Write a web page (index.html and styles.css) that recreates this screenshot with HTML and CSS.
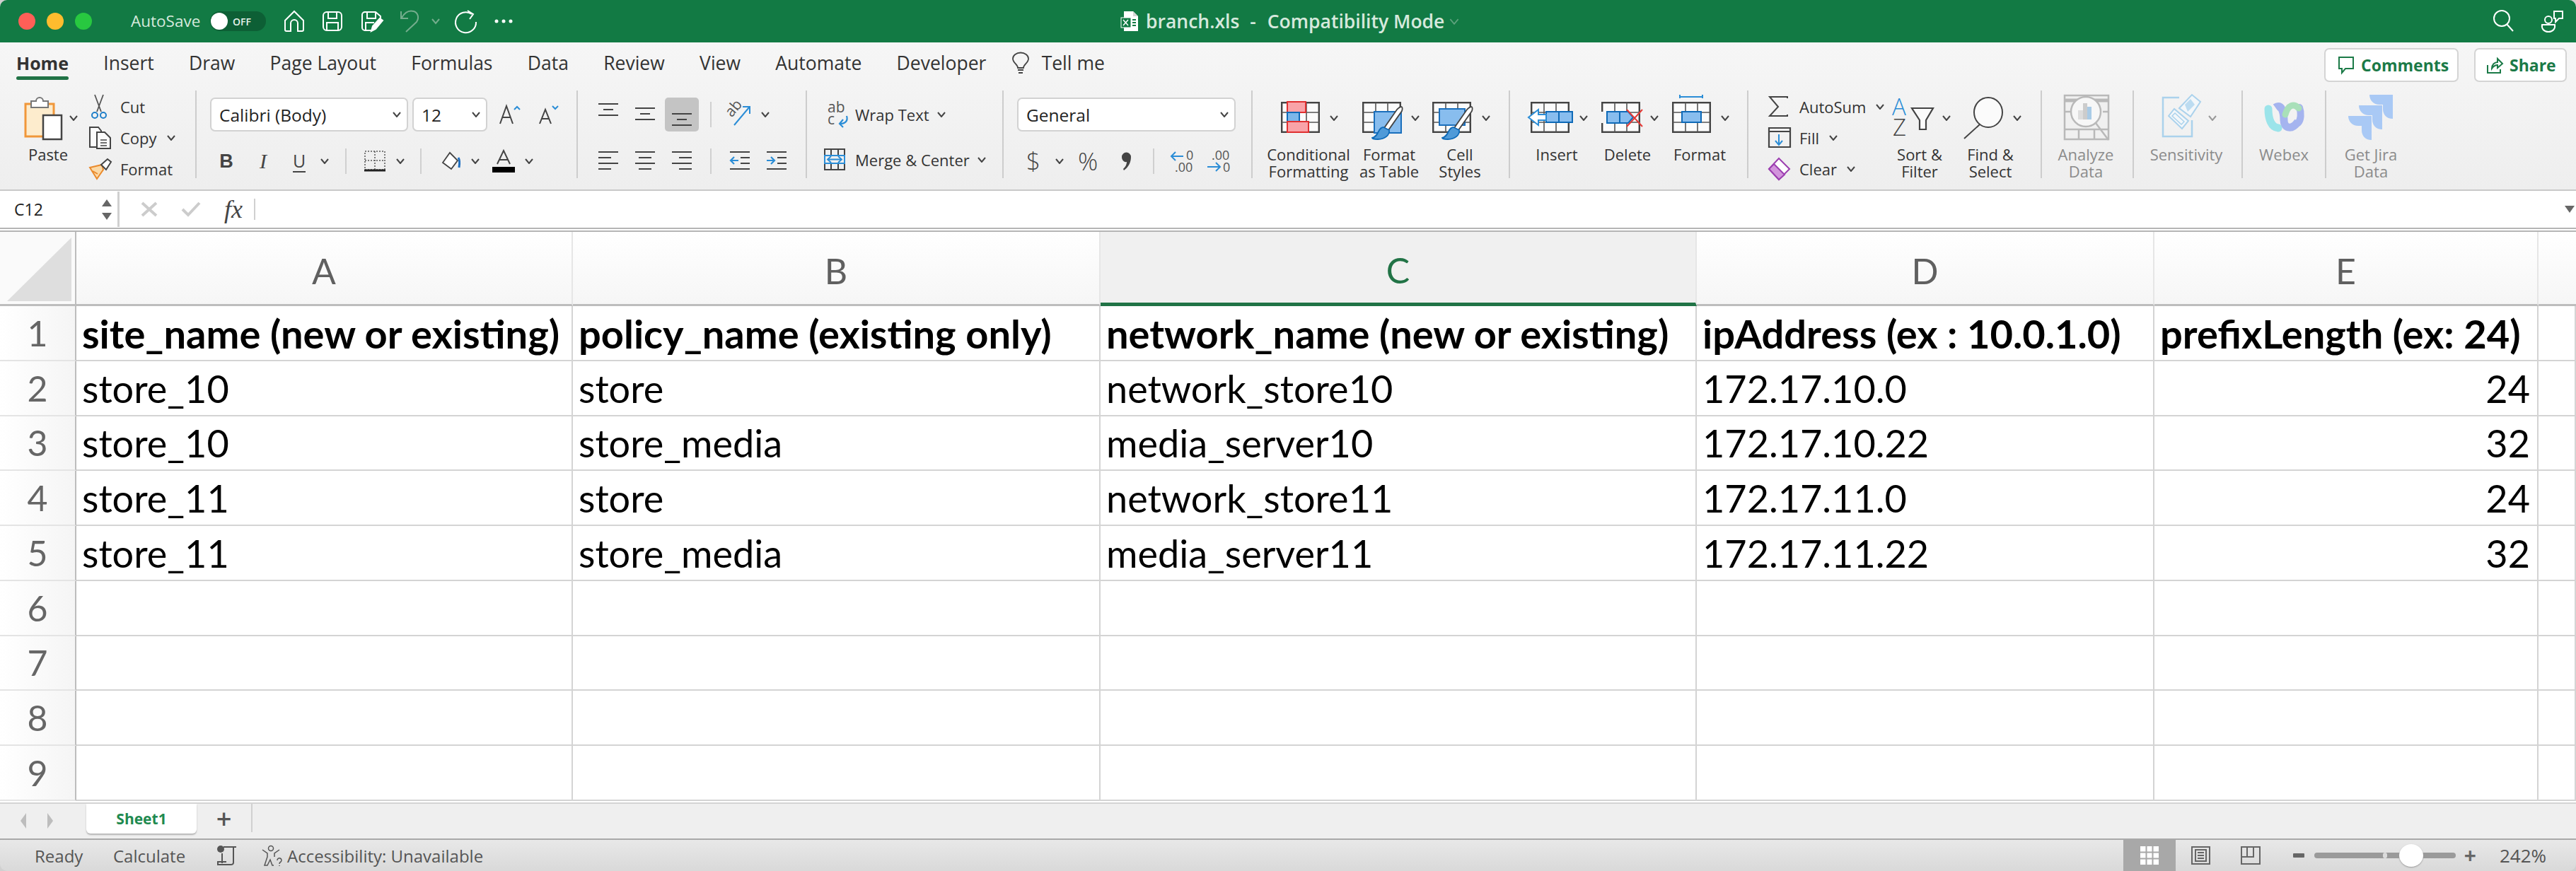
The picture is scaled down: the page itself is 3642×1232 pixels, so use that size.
FILE: index.html
```html
<!DOCTYPE html>
<html lang="en">
<head>
    <meta charset="UTF-8">
    <title>branch.xls - Compatibility Mode</title>
    <link rel="stylesheet" href="styles.css">
</head>
<body>
<svg class="defs" width="0" height="0">
    <symbol id="chev" viewBox="0 0 12 8"><path d="M1 1l5 6 5-6" fill="none" stroke="#444" stroke-width="2"/></symbol>
    <symbol id="chev-dim" viewBox="0 0 12 8"><path d="M1 1l5 6 5-6" fill="none" stroke="#999" stroke-width="2"/></symbol>
    <symbol id="tbl" viewBox="0 0 55 44">
        <rect x="1.2" y="1.2" width="52.6" height="41.6" fill="#fbfbfb" stroke="#444" stroke-width="2.4"/>
        <path d="M19 1v42M36 1v42M1 15h53M1 29h53" fill="none" stroke="#555" stroke-width="1.6"/>
    </symbol>
    <symbol id="brush" viewBox="0 0 46 48">
        <path d="M42 1c2 0 2 3 1 6L24 34l-6-3L36 5c2-2 4-4 6-4z" fill="#fff" stroke="#444" stroke-width="1.8"/>
        <path d="M17 30l8 4c1 7-6 13-16 13-5 0-8-1-8-2 5-1 7-5 9-9 2-4 4-6 7-6z" fill="#4f9ad8" stroke="#0e6ab8" stroke-width="1.8"/>
    </symbol>
    <symbol id="jira-piece" viewBox="0 0 33 34"><path d="M0 0h33v34c-9 0-14-6-14-14v-6h-5C6 14 0 8 0 0z"/></symbol>
</svg>

<div class="app">
    <!-- Title bar -->
    <header class="titlebar">
        <div class="lights"><i class="light red"></i><i class="light yellow"></i><i class="light green"></i></div>
        <span class="autosave">AutoSave</span>
        <div class="toggle"><i class="knob"></i><span>OFF</span></div>
        <div class="quick">
            <svg width="28" height="30" viewBox="0 0 28 30" fill="none" stroke="#fff" stroke-width="2"><path d="M14 1l13 13v13a2 2 0 0 1-2 2h-6V18a5 5 0 0 0-10 0v11H3a2 2 0 0 1-2-2V14z"/></svg>
            <svg width="28" height="30" viewBox="0 0 28 30" fill="none" stroke="#fff" stroke-width="2"><rect x="1" y="2" width="26" height="26" rx="5"/><path d="M8 2v9h12V2M6 28V17h16v11"/></svg>
            <svg width="30" height="30" viewBox="0 0 30 30" fill="none" stroke="#fff" stroke-width="2"><path d="M14 28H5a4 4 0 0 1-4-4V6a4 4 0 0 1 4-4h15l7 6v5"/><path d="M8 2v9h12V2M6 28V17h12"/><path d="M14 29l2-7 10-11 4 3-10 12z" fill="#fff"/></svg>
            <svg width="28" height="32" viewBox="0 0 28 32" fill="none" stroke="#74ad8d" stroke-width="2"><path d="M2 2v10h10M3 11C7 4 13 0 20 2c6 2 8 9 4 15L9 31"/></svg>
            <svg width="12" height="8"><path d="M1 1l5 6 5-6" fill="none" stroke="#74ad8d" stroke-width="2"/></svg>
            <svg width="32" height="32" viewBox="0 0 32 32" fill="none" stroke="#fff" stroke-width="2"><path d="M24 6A14.500 14.500 0 1 0 30 17"/><path d="M18 1l8 5-5 7"/></svg>
            <svg width="26" height="6" viewBox="0 0 26 6" fill="#fff"><circle cx="3" cy="3" r="2.500"/><circle cx="13" cy="3" r="2.500"/><circle cx="23" cy="3" r="2.500"/></svg>
        </div>
        <div class="doc-title">
            <svg width="26" height="30" viewBox="0 0 26 30"><path d="M5 1h13l7 7v21H5z" fill="#fff"/><path d="M18 1v7h7" fill="#d5d5d5"/><rect x="1" y="10" width="14" height="14" fill="#127a44" stroke="#fff"/><path d="M4 13l7 8M11 13l-7 8" stroke="#fff" stroke-width="1.500"/><path d="M17 13h5M17 17h5M17 21h5" stroke="#127a44" stroke-width="2"/></svg>
            <span class="doc-name">branch.xls</span><span class="doc-dash">-</span><span class="doc-name">Compatibility Mode</span>
            <svg width="16" height="9" viewBox="0 0 12 8"><path d="M1 1l5 6 5-6" fill="none" stroke="#5fa27e" stroke-width="1.500"/></svg>
        </div>
        <div class="title-right">
            <svg width="30" height="30" viewBox="0 0 30 30" fill="none" stroke="#fff" stroke-width="2"><ellipse cx="12" cy="12" rx="11" ry="11"/><path d="M19 20l9 10"/></svg>
            <svg width="32" height="32" viewBox="0 0 32 32" fill="none" stroke="#fff" stroke-width="2"><circle cx="10" cy="14" r="5"/><path d="M1 21h18c1 6-3 10-9 10S0 27 1 21zM18 2h12v10h-5l-5 5v-5h-2z"/></svg>
        </div>
    </header>

    <!-- Ribbon -->
    <section class="ribbon">
        <div class="tabs-row">
            <nav class="tabs">
                <a class="tab active">Home</a>
                <a class="tab">Insert</a>
                <a class="tab">Draw</a>
                <a class="tab">Page Layout</a>
                <a class="tab">Formulas</a>
                <a class="tab">Data</a>
                <a class="tab">Review</a>
                <a class="tab">View</a>
                <a class="tab">Automate</a>
                <a class="tab">Developer</a>
                <a class="tab tell">
                    <svg width="26" height="30" viewBox="0 0 26 30" fill="none" stroke="#444" stroke-width="1.800"><path d="M9 22c0-5-7-7-7-13a11 8.500 0 0 1 22 0c0 6-7 8-7 13z"/><path d="M9 25h8M10 29h6"/></svg>
                    Tell me
                </a>
            </nav>
            <div class="share-btns">
                <button class="pill pill-comments">
                    <svg width="24" height="24" viewBox="0 0 24 24" fill="none" stroke="#1b7a47" stroke-width="2"><path d="M2 1h20v16H11l-5 6v-6H2z"/></svg>
                    Comments
                </button>
                <button class="pill pill-share">
                    <svg width="24" height="24" viewBox="0 0 24 24" fill="none" stroke="#1b7a47" stroke-width="2"><path d="M2 12v11h18v-5M8 17c0-6 4-9 8-9V3l7 7-7 6v-4c-4 0-6 2-8 5z"/></svg>
                    Share
                </button>
            </div>
        </div>

        <div class="groups">
            <!-- Clipboard -->
            <div class="group g-clip">
                <div class="big b-paste">
                    <svg width="96" height="76" viewBox="0 0 96 76">
                        <path d="M16 19h40v46H16z" fill="#fdeccd" stroke="#f0973a" stroke-width="3"/>
                        <path d="M24 24v-9h7a5 5 0 0 1 10 0h7v9z" fill="#fff" stroke="#777" stroke-width="2"/>
                        <rect x="41" y="35" width="26" height="34" fill="#fff" stroke="#444" stroke-width="2.500"/>
                        <use href="#chev" x="78" y="35" width="12" height="8"/>
                    </svg>
                    <span class="label">Paste</span>
                </div>
                <div class="stack">
                    <div class="stack-item">
                        <span class="stack-ico"><svg width="28" height="34" viewBox="0 0 28 34" fill="none"><path d="M8 0l9 24M20 0l-9 24" stroke="#555" stroke-width="1.800"/><circle cx="8" cy="29" r="4" stroke="#1f7fc9" stroke-width="2"/><circle cx="20" cy="29" r="4" stroke="#1f7fc9" stroke-width="2"/></svg></span>
                        <span class="label">Cut</span>
                    </div>
                    <div class="stack-item">
                        <span class="stack-ico"><svg width="32" height="32" viewBox="0 0 32 32" fill="#fbfbfb" stroke="#444" stroke-width="2"><path d="M1 1h12l4 5v23H1z"/><path d="M11 8h11l8 8v15H11z"/><path d="M16 19h9M16 23h9M16 27h9" stroke-width="1.500"/></svg></span>
                        <span class="label">Copy</span>
                        <svg class="chev-after" width="12" height="8"><use href="#chev"/></svg>
                    </div>
                    <div class="stack-item">
                        <span class="stack-ico"><svg width="32" height="30" viewBox="0 0 32 30"><path d="M1 13l17-4 2 7-9 13z" fill="#fbd9a6" stroke="#ea8a2c" stroke-width="2"/><path d="M5 18l7 4" stroke="#ea8a2c" stroke-width="2"/><path d="M17 9l9-8 5 4-7 11z" fill="#fff" stroke="#444" stroke-width="2"/></svg></span>
                        <span class="label">Format</span>
                    </div>
                </div>
            </div>

            <!-- Font -->
            <div class="group g-font two-rows">
                <div class="row font-r1">
                    <div class="select sel-font"><span>Calibri (Body)</span><svg width="12" height="8"><use href="#chev"/></svg></div>
                    <div class="select sel-size"><span>12</span><svg width="12" height="8"><use href="#chev"/></svg></div>
                    <svg class="grow-a" width="32" height="28" viewBox="0 0 32 28"><path d="M2 27L11 2l9 25M5 18h12" fill="none" stroke="#444" stroke-width="2"/><path d="M22 7l4-4 4 4" fill="none" stroke="#2b8dd6" stroke-width="2"/></svg>
                    <svg class="shrink-a" width="30" height="28" viewBox="0 0 30 28"><path d="M2 27l8-20 8 20M5 20h10" fill="none" stroke="#444" stroke-width="2"/><path d="M20 2l4 4 4-4" fill="none" stroke="#2b8dd6" stroke-width="2"/></svg>
                </div>
                <div class="row font-r2">
                    <b class="fmt">B</b>
                    <i class="fmt fmt-i">I</i>
                    <span class="fmt-u">U</span>
                    <svg width="12" height="8"><use href="#chev"/></svg>
                    <i class="vsep"></i>
                    <svg width="30" height="30" viewBox="0 0 30 30" fill="none"><path d="M1 1h28v26H1zM15 1v26M1 14h28" stroke="#555" stroke-width="1.500" stroke-dasharray="2 2"/><path d="M0 28h30" stroke="#222" stroke-width="3"/></svg>
                    <svg width="12" height="8"><use href="#chev"/></svg>
                    <i class="vsep"></i>
                    <svg width="28" height="26" viewBox="0 0 28 26" fill="none"><path d="M12 1l11 11-9 12-12-9z" fill="#fff" stroke="#444" stroke-width="1.800"/><path d="M24 8c2 3 2 8 1 14" stroke="#1f6fc0" stroke-width="3"/></svg>
                    <svg width="12" height="8"><use href="#chev"/></svg>
                    <svg width="32" height="32" viewBox="0 0 32 32"><path d="M7 20L16 1l9 19M10 14h12" fill="none" stroke="#444" stroke-width="2"/><rect y="24" width="32" height="8" fill="#000"/></svg>
                    <svg width="12" height="8"><use href="#chev"/></svg>
                </div>
            </div>

            <!-- Alignment -->
            <div class="group g-align two-rows">
                <div class="row align-r1">
                    <svg width="28" height="48" viewBox="0 0 28 48" stroke="#444" stroke-width="2.200"><path d="M0 9h28M7 17h14M0 25h28"/></svg>
                    <svg width="28" height="48" viewBox="0 0 28 48" stroke="#444" stroke-width="2.200"><path d="M0 15h28M7 23h14M0 31h28"/></svg>
                    <div class="selected"><svg width="28" height="48" viewBox="0 0 28 48" stroke="#444" stroke-width="2.200"><path d="M0 23h28M7 31h14M0 39h28"/></svg></div>
                    <i class="vsep"></i>
                    <svg width="34" height="32" viewBox="0 0 34 32" fill="none"><text x="1" y="15" class="ab" transform="rotate(-50 10 12)">ab</text><path d="M10 31L31 6M22 5h10v10" stroke="#2b8dd6" stroke-width="2"/></svg>
                    <svg width="12" height="8"><use href="#chev"/></svg>
                </div>
                <div class="row align-r2">
                    <svg width="28" height="32" viewBox="0 0 28 32" stroke="#444" stroke-width="2.200"><path d="M0 3h28M0 11h18M0 19h28M0 27h18"/></svg>
                    <svg width="28" height="32" viewBox="0 0 28 32" stroke="#444" stroke-width="2.200"><path d="M0 3h28M5 11h18M0 19h28M5 27h18"/></svg>
                    <svg width="28" height="32" viewBox="0 0 28 32" stroke="#444" stroke-width="2.200"><path d="M0 3h28M10 11h18M0 19h28M10 27h18"/></svg>
                    <i class="vsep"></i>
                    <svg width="28" height="32" viewBox="0 0 28 32" fill="none"><path d="M0 3h28M15 11h13M15 19h13M0 27h28" stroke="#444" stroke-width="2.200"/><path d="M12 15H1M6 10l-5 5 5 5" stroke="#2b8dd6" stroke-width="2.200"/></svg>
                    <svg width="28" height="32" viewBox="0 0 28 32" fill="none"><path d="M0 3h28M15 11h13M15 19h13M0 27h28" stroke="#444" stroke-width="2.200"/><path d="M0 15h11M6 10l5 5-5 5" stroke="#2b8dd6" stroke-width="2.200"/></svg>
                </div>
            </div>

            <!-- Wrap and merge -->
            <div class="group g-merge two-rows">
                <div class="row merge-r1">
                    <svg width="44" height="48" viewBox="0 0 44 48" fill="none"><text x="5" y="21" class="ab">ab</text><text x="5" y="38" class="ab">c</text><path d="M32 26c2 6-1 11-9 11M27 31l-5 6 5 5" stroke="#2b8dd6" stroke-width="2.200"/></svg>
                    <span class="label">Wrap Text</span>
                    <svg width="12" height="8"><use href="#chev"/></svg>
                </div>
                <div class="row merge-r2">
                    <svg width="44" height="32" viewBox="0 0 44 32" fill="none"><path d="M1 1h28v29H1zM10 1v9M20 1v9M10 21v9M20 21v9" stroke="#444" stroke-width="2"/><path d="M1 10h28v11H1z" stroke="#2b8dd6" stroke-width="2"/><path d="M5 15.500h20M10 11l-5 4.500 5 4.500M20 11l5 4.500-5 4.500" stroke="#2b8dd6" stroke-width="1.800"/></svg>
                    <span class="label">Merge &amp; Center</span>
                    <svg width="12" height="8"><use href="#chev"/></svg>
                </div>
            </div>

            <!-- Number -->
            <div class="group g-number two-rows">
                <div class="row number-r1">
                    <div class="select sel-number"><span>General</span><svg width="12" height="8"><use href="#chev"/></svg></div>
                </div>
                <div class="row number-r2">
                    <span class="num-sym">$</span>
                    <svg width="12" height="8"><use href="#chev"/></svg>
                    <span class="num-sym">%</span>
                    <svg width="15" height="27" viewBox="0 0 15 27" fill="#444"><path d="M1 7a6.500 6.500 0 0 1 13 0c0 8-4 15-10 19l-1-2c3-3 5-6 5-10-4 1-7-3-7-7z"/></svg>
                    <i class="vsep"></i>
                    <svg width="36" height="32" viewBox="0 0 36 32" fill="none"><text x="24" y="14" class="dec">0</text><text x="8" y="31" class="dec">.00</text><path d="M20 9H3M9 3L3 9l6 6" stroke="#2b8dd6" stroke-width="2"/></svg>
                    <svg width="36" height="32" viewBox="0 0 36 32" fill="none"><text x="8" y="14" class="dec">.00</text><text x="24" y="31" class="dec">0</text><path d="M2 24h18M14 18l6 6-6 6" stroke="#2b8dd6" stroke-width="2"/></svg>
                </div>
            </div>

            <!-- Styles -->
            <div class="group g-styles">
                <div class="big b-cond">
                    <svg width="116" height="76" viewBox="0 0 116 76">
                        <use href="#tbl" x="19" y="16" width="55" height="44"/>
                        <path d="M28 16h26v15H28z" fill="#f9a3a8" stroke="#e03030" stroke-width="2"/>
                        <path d="M28 31h17v13H28z" fill="#7cb7ea" stroke="#0e6ab8" stroke-width="2"/>
                        <path d="M28 44h30v15H28z" fill="#f9a3a8" stroke="#e03030" stroke-width="2"/>
                        <use href="#chev" x="88" y="35" width="12" height="8"/>
                    </svg>
                    <span class="label">Conditional<br>Formatting</span>
                </div>
                <div class="big b-table">
                    <svg width="112" height="76" viewBox="0 0 112 76">
                        <use href="#tbl" x="18" y="16" width="55" height="44"/>
                        <path d="M35 30h38v30H35z" fill="#88bdee" stroke="#1a6fbc" stroke-width="2"/>
                        <use href="#brush" x="31" y="22" width="46" height="48"/>
                        <use href="#chev" x="87" y="35" width="12" height="8"/>
                    </svg>
                    <span class="label">Format<br>as Table</span>
                </div>
                <div class="big b-cellst">
                    <svg width="88" height="76" viewBox="0 0 88 76">
                        <use href="#tbl" x="5" y="16" width="55" height="44"/>
                        <path d="M15 26h36v23H15z" fill="#88bdee" stroke="#1a6fbc" stroke-width="2"/>
                        <use href="#brush" x="18" y="22" width="46" height="48"/>
                        <use href="#chev" x="75" y="35" width="12" height="8"/>
                    </svg>
                    <span class="label">Cell<br>Styles</span>
                </div>
            </div>

            <!-- Cells -->
            <div class="group g-cells">
                <div class="big b-ins">
                    <svg width="100" height="76" viewBox="0 0 100 76">
                        <use href="#tbl" x="13" y="16" width="55" height="44"/>
                        <path d="M35 30h37v15H35zM53 30v15" fill="#88bdee" stroke="#0e6ab8" stroke-width="2"/>
                        <path d="M24 27l-14 11 14 11v-7h11v-8H24z" fill="#fff" stroke="#2b8dd6" stroke-width="2"/>
                        <use href="#chev" x="82" y="35" width="12" height="8"/>
                    </svg>
                    <span class="label">Insert</span>
                </div>
                <div class="big b-del">
                    <svg width="100" height="76" viewBox="0 0 100 76">
                        <use href="#tbl" x="13" y="16" width="55" height="44"/>
                        <path d="M11 30h9v16h-9z" fill="#f3f3f3"/>
                        <path d="M21 30h30l7 8-7 8H21zM39 30v16" fill="#88bdee" stroke="#0e6ab8" stroke-width="2"/>
                        <path d="M49 27l22 24M71 27L49 51" stroke="#e53935" stroke-width="2"/>
                        <use href="#chev" x="82" y="35" width="12" height="8"/>
                    </svg>
                    <span class="label">Delete</span>
                </div>
                <div class="big b-fmt">
                    <svg width="104" height="76" viewBox="0 0 104 76">
                        <path d="M24 6v5M24 9h32M56 6v5" fill="none" stroke="#2b8dd6" stroke-width="2"/>
                        <use href="#tbl" x="13" y="16" width="55" height="44"/>
                        <rect x="27" y="30" width="27" height="15" fill="#88bdee" stroke="#0e6ab8" stroke-width="2"/>
                        <use href="#chev" x="82" y="35" width="12" height="8"/>
                    </svg>
                    <span class="label">Format</span>
                </div>
            </div>

            <!-- Editing -->
            <div class="group g-edit">
                <div class="stack stack-edit">
                    <div class="stack-item">
                        <span class="stack-ico"><svg width="28" height="30" viewBox="0 0 28 30" fill="none" stroke="#444" stroke-width="2"><path d="M27 3V1H2l12 14L2 28h25v-2"/></svg></span>
                        <span class="label">AutoSum</span>
                        <svg class="chev-after" width="12" height="8"><use href="#chev"/></svg>
                    </div>
                    <div class="stack-item">
                        <span class="stack-ico"><svg width="32" height="30" viewBox="0 0 32 30" fill="none"><path d="M1 1h30v27H1zM1 6h30" stroke="#444" stroke-width="2.200"/><path d="M15 10v14M10 19l5 6 5-6" stroke="#2b8dd6" stroke-width="2"/></svg></span>
                        <span class="label">Fill</span>
                        <svg class="chev-after" width="12" height="8"><use href="#chev"/></svg>
                    </div>
                    <div class="stack-item">
                        <span class="stack-ico"><svg width="32" height="32" viewBox="0 0 32 32"><path d="M15 1l15 15-15 15L1 16z" fill="#fff" stroke="#9c3fb0" stroke-width="2"/><path d="M8 9l15 15-8 7L1 16z" fill="#d294dc" stroke="#9c3fb0" stroke-width="2"/></svg></span>
                        <span class="label">Clear</span>
                        <svg class="chev-after" width="12" height="8"><use href="#chev"/></svg>
                    </div>
                </div>
                <div class="big b-sort">
                    <svg width="98" height="76" viewBox="0 0 98 76" fill="none">
                        <text x="10" y="35" class="sort-a">A</text>
                        <text x="11" y="64" class="sort-z">Z</text>
                        <path d="M38 25h30L58 42v13h-9V42z" fill="#fbfbfb" stroke="#444" stroke-width="2.200"/>
                        <use href="#chev" x="81" y="35" width="12" height="8"/>
                    </svg>
                    <span class="label">Sort &amp;<br>Filter</span>
                </div>
                <div class="big b-find">
                    <svg width="102" height="76" viewBox="0 0 102 76" fill="none" stroke="#444">
                        <ellipse cx="48" cy="31" rx="20" ry="21" fill="#fbfbfb" stroke-width="2"/>
                        <path d="M36 48L14 68" stroke-width="2"/>
                        <use href="#chev" x="83" y="35" width="12" height="8"/>
                    </svg>
                    <span class="label">Find &amp;<br>Select</span>
                </div>
            </div>

            <!-- Add-ins, all dimmed -->
            <div class="group g-analyze">
                <div class="big dim b-analyze">
                    <svg width="124" height="76" viewBox="0 0 124 76" fill="none" stroke="#b9b9b9" stroke-width="2.500">
                        <rect x="32" y="7" width="62" height="62" fill="#f0f0f0"/>
                        <path d="M32 14h62" stroke-width="5"/>
                        <path d="M32 55h62M52 55v14M74 55v14M32 30h8M86 30h8"/>
                        <circle cx="62" cy="30" r="21" fill="#f7f7f7"/>
                        <rect x="51" y="28" width="7" height="13" fill="#ddd" stroke="none"/>
                        <rect x="58" y="18" width="6" height="23" fill="#ccc" stroke="none"/>
                        <rect x="64" y="23" width="6" height="18" fill="#a9cbe6" stroke="none"/>
                        <path d="M76 46l18 24"/>
                    </svg>
                    <span class="label">Analyze<br>Data</span>
                </div>
            </div>
            <div class="group g-sens">
                <div class="big dim b-sens">
                    <svg width="148" height="76" viewBox="0 0 148 76" fill="none">
                        <path d="M64 10H41v55h41V42" stroke="#abd2ec" stroke-width="2.500"/>
                        <path d="M49 36l8-10 20 17-9 11z" fill="#f3f7fa" stroke="#abd2ec" stroke-width="2"/>
                        <path d="M54 36l4-4 13 12-4 4z" stroke="#abd2ec" stroke-width="1.500"/>
                        <path d="M64 25L82 6l12 10-14 21z" fill="#f3f7fa" stroke="#abd2ec" stroke-width="2"/>
                        <path d="M72 20l8-8 6 8-10 10z" fill="#bcdcf1"/>
                        <use href="#chev-dim" x="105" y="35" width="12" height="8"/>
                    </svg>
                    <span class="label">Sensitivity</span>
                </div>
            </div>
            <div class="group g-webex">
                <div class="big dim b-webex">
                    <svg width="116" height="76" viewBox="0 0 116 76" fill="none">
                        <path d="M36 26c0 14 4 26 14 27" stroke="#9be4ea" stroke-width="11" stroke-linecap="round"/>
                        <path d="M46 24c8-6 12 6 12 18 0 10 10 16 20 2" stroke="#a5b4ef" stroke-width="11"/>
                        <path d="M80 24c3 8 2 18-2 22" stroke="#a5b4ef" stroke-width="10" stroke-linecap="round"/>
                        <path d="M60 34c4-14 12-16 19-9" stroke="#a9e0b9" stroke-width="9" stroke-linecap="round"/>
                    </svg>
                    <span class="label">Webex</span>
                </div>
            </div>
            <div class="group g-jira">
                <div class="big dim b-jira">
                    <svg width="126" height="76" viewBox="0 0 126 76" fill="#a9c9f5">
                        <use href="#jira-piece" x="61" y="6" width="33" height="34"/>
                        <use href="#jira-piece" x="46" y="21" width="33" height="34"/>
                        <use href="#jira-piece" x="31" y="36" width="33" height="34"/>
                    </svg>
                    <span class="label">Get Jira<br>Data</span>
                </div>
            </div>
        </div>
    </section>

    <!-- Formula bar -->
    <div class="formula-bar">
        <div class="name-box">
            <span>C12</span>
            <div class="spin"><i class="tri up"></i><i class="tri down"></i></div>
        </div>
        <div class="fx-tools">
            <svg width="24" height="20" viewBox="0 0 24 20"><path d="M2 1l20 18M22 1L2 19" stroke="#ccc" stroke-width="4"/></svg>
            <svg width="28" height="20" viewBox="0 0 28 20" fill="none"><path d="M2 10l8 8L26 1" stroke="#ccc" stroke-width="4"/></svg>
            <span class="fx">fx</span>
            <i class="vsep fx-sep"></i>
        </div>
        <i class="tri down end-tri"></i>
    </div>

    <!-- Sheet -->
    <div class="sheet">
        <div class="corner"><i></i></div>
        <div class="colhead">A</div>
        <div class="colhead">B</div>
        <div class="colhead current">C</div>
        <div class="colhead">D</div>
        <div class="colhead">E</div>
        <div class="colhead last"></div>

        <div class="rowhead">1</div>
        <div class="cell bold">site_name (new or existing)</div>
        <div class="cell bold">policy_name (existing only)</div>
        <div class="cell bold">network_name (new or existing)</div>
        <div class="cell bold">ipAddress (ex : 10.0.1.0)</div>
        <div class="cell bold">prefixLength (ex: 24)</div>
        <div class="cell"></div>

        <div class="rowhead">2</div>
        <div class="cell">store_10</div>
        <div class="cell">store</div>
        <div class="cell">network_store10</div>
        <div class="cell">172.17.10.0</div>
        <div class="cell num">24</div>
        <div class="cell"></div>

        <div class="rowhead">3</div>
        <div class="cell">store_10</div>
        <div class="cell">store_media</div>
        <div class="cell">media_server10</div>
        <div class="cell">172.17.10.22</div>
        <div class="cell num">32</div>
        <div class="cell"></div>

        <div class="rowhead">4</div>
        <div class="cell">store_11</div>
        <div class="cell">store</div>
        <div class="cell">network_store11</div>
        <div class="cell">172.17.11.0</div>
        <div class="cell num">24</div>
        <div class="cell"></div>

        <div class="rowhead">5</div>
        <div class="cell">store_11</div>
        <div class="cell">store_media</div>
        <div class="cell">media_server11</div>
        <div class="cell">172.17.11.22</div>
        <div class="cell num">32</div>
        <div class="cell"></div>

        <div class="rowhead">6</div>
        <div class="cell"></div><div class="cell"></div><div class="cell"></div><div class="cell"></div><div class="cell"></div><div class="cell"></div>
        <div class="rowhead">7</div>
        <div class="cell"></div><div class="cell"></div><div class="cell"></div><div class="cell"></div><div class="cell"></div><div class="cell"></div>
        <div class="rowhead">8</div>
        <div class="cell"></div><div class="cell"></div><div class="cell"></div><div class="cell"></div><div class="cell"></div><div class="cell"></div>
        <div class="rowhead">9</div>
        <div class="cell"></div><div class="cell"></div><div class="cell"></div><div class="cell"></div><div class="cell"></div><div class="cell"></div>
    </div>

    <!-- Sheet tabs -->
    <div class="sheet-tabs">
        <div class="tab-arrows"><i class="tri left"></i><i class="tri right"></i></div>
        <div class="sheet-tab">Sheet1</div>
        <span class="add-sheet">+</span>
        <i class="vsep add-sep"></i>
    </div>

    <!-- Status bar -->
    <footer class="statusbar">
        <span class="st-ready">Ready</span>
        <span class="st-calc">Calculate</span>
        <svg class="st-macro" width="30" height="28" viewBox="0 0 30 28" fill="none" stroke="#555" stroke-width="2"><circle cx="6" cy="5" r="5" fill="#555" stroke="none"/><path d="M10 2h18M24 2v22c0 2-2 3-4 3H2v-4h12M8 11v14"/></svg>
        <svg class="st-access" width="30" height="30" viewBox="0 0 30 30" fill="none" stroke="#555" stroke-width="1.500"><circle cx="13" cy="5" r="3.500"/><path d="M1 7l7 5v5l-4 12h4l4-8 3 8h2M25 7l-7 5v5"/><path d="M22 22a3 3 0 1 1 5 2c-2 1-2 2-2 3M25 29v1"/></svg>
        <span class="st-acc-text">Accessibility: Unavailable</span>

        <div class="view-btns">
            <div class="view-btn active">
                <svg width="26" height="26" viewBox="0 0 26 26"><rect width="26" height="26" fill="#fff"/><path d="M8.500 0v26M17.500 0v26M0 8.500h26M0 17.500h26" stroke="#a8a8a8" stroke-width="2"/></svg>
            </div>
            <div class="view-btn">
                <svg width="27" height="26" viewBox="0 0 27 26" fill="none" stroke="#666" stroke-width="2"><rect x="1" y="1" width="25" height="24"/><rect x="6" y="5" width="15" height="16"/><path d="M9 9h9M9 13h9M9 17h9"/></svg>
            </div>
            <div class="view-btn">
                <svg width="28" height="26" viewBox="0 0 28 26" fill="none" stroke="#666" stroke-width="2"><rect x="1" y="1" width="26" height="24"/><path d="M1 15h17V1M9 1v14"/></svg>
            </div>
        </div>
        <div class="zoom-ctl">
            <i class="zoom-minus"></i>
            <div class="zoom-track"><i class="zoom-tick"></i><i class="zoom-knob"></i></div>
            <span class="zoom-plus">+</span>
        </div>
        <span class="zoom-pct">242%</span>
    </footer>
</div>
</body>
</html>
```

FILE: styles.css
```css
/* Page */
html, body {
    margin: 0;
    padding: 0;
    background: #d0d0d0;
}

body {
    font-family: "Open Sans", "Liberation Sans", sans-serif;
    color: #333;
}

.defs {
    position: absolute;
}

svg {
    display: block;
    flex: none;
    overflow: visible;
}

.app {
    width: 3642px;
    height: 1232px;
    display: flex;
    flex-direction: column;
    border-radius: 10px;
    overflow: hidden;
}

/* Title bar */
.titlebar {
    height: 60px;
    flex: none;
    display: flex;
    align-items: center;
    background: #127a44;
    color: #d6e9dd;
}

.lights {
    display: flex;
    gap: 16px;
    margin-left: 26px;
}

.light {
    width: 24px;
    height: 24px;
    border-radius: 50%;
}

.red { background: #ff5f57; }
.yellow { background: #febc2e; }
.green { background: #28c840; }

.autosave {
    margin-left: 55px;
    width: 112px;
    font-size: 22.500px;
    line-height: 1;
}

.toggle {
    width: 79px;
    height: 28px;
    border-radius: 14px;
    background: #0d5f35;
    display: flex;
    align-items: center;
    color: #e8f2ec;
    font-size: 14px;
    font-weight: 600;
}

.knob {
    width: 24px;
    height: 24px;
    margin: 0 7px 0 1px;
    border-radius: 50%;
    background: #fff;
}

.quick {
    margin-left: 26px;
    display: grid;
    grid-template-columns: 54px 55px 54px 45px 33px 56px 26px;
    align-items: center;
}

.doc-title {
    margin-left: 859px;
    display: flex;
    align-items: center;
    font-size: 26.500px;
    font-weight: 600;
}

.doc-name {
    margin-left: 10px;
}

.doc-dash {
    margin: 0 6px 0 15px;
}

.doc-title svg:last-child {
    margin-left: 6px;
}

.title-right {
    margin-left: auto;
    margin-right: 17px;
    display: flex;
    gap: 38px;
}

/* Ribbon */
.ribbon {
    height: 210px;
    flex: none;
    box-sizing: border-box;
    border-bottom: 2px solid #c9c9c9;
    background: linear-gradient(#f6f6f6, #eeeeee);
}

.tabs-row {
    height: 68px;
    display: flex;
    justify-content: space-between;
}

.tabs {
    display: flex;
    gap: 49.300px;
    margin-left: 23px;
    height: 58px;
    align-items: center;
}

.tab {
    position: relative;
    font-size: 26.500px;
    line-height: 30px;
    color: #333;
    white-space: nowrap;
}

.tab.active {
    font-weight: 700;
    font-size: 25px;
}

.tab.active::after {
    content: "";
    position: absolute;
    left: 0;
    right: 0;
    bottom: -9px;
    height: 5px;
    border-radius: 3px;
    background: #217346;
}

.tell {
    display: flex;
    align-items: center;
    gap: 17px;
    margin-left: -14px;
}

.share-btns {
    display: flex;
    gap: 22px;
    padding: 8px 13px 0 0;
}

.pill {
    height: 48px;
    box-sizing: border-box;
    display: flex;
    align-items: center;
    gap: 9px;
    padding: 0 0 0 17px;
    border: 2px solid #d4d4d4;
    border-radius: 7px;
    background: #fff;
    color: #1b7a47;
    font-family: inherit;
    font-size: 23px;
    font-weight: 700;
}

.pill-comments { width: 190px; }
.pill-share { width: 131px; padding-left: 15px; }

.groups {
    display: flex;
    height: 124px;
}

.group {
    flex: none;
    height: 124px;
    box-sizing: border-box;
    border-right: 2px solid #cdcdcd;
    display: flex;
}

.g-clip { width: 278px; padding-left: 20px; }
.g-font { width: 539px; padding-left: 19px; }
.g-align { width: 324px; padding-left: 23px; }
.g-merge { width: 278px; padding-left: 24px; }
.g-number { width: 352px; padding-left: 19px; }
.g-styles { width: 364px; padding-left: 21px; }
.g-cells { width: 337px; padding-left: 16px; }
.g-edit { width: 415px; padding-left: 28px; }
.g-analyze { width: 130px; }
.g-sens { width: 154px; }
.g-webex { width: 118px; }
.g-jira { border-right: 0; }

.label {
    font-size: 22px;
    line-height: 24px;
    color: #333;
    white-space: nowrap;
}

.big {
    flex: none;
    display: flex;
    flex-direction: column;
    align-items: center;
}

.big .label {
    margin-top: 2px;
    text-align: center;
}

.dim .label {
    color: #8b8b8b;
}

.b-paste { width: 96px; }
.b-sort { width: 98px; }
.b-find { width: 102px; }
.b-analyze { width: 124px; }
.b-sens { width: 148px; }
.b-webex { width: 116px; }
.b-jira { width: 126px; }

/* Stacked small buttons */
.stack {
    margin-left: 10px;
    padding-top: 1px;
    display: grid;
    grid-auto-rows: 44px;
}

.stack-edit {
    margin-left: 0;
    width: 165px;
}

.stack-item {
    display: flex;
    align-items: center;
}

.stack-ico {
    width: 44px;
    flex: none;
}

.chev-after {
    margin-left: 14px;
}

/* Two row groups */
.two-rows {
    flex-direction: column;
    padding-top: 10px;
}

.row {
    display: grid;
    align-items: center;
    justify-items: center;
}

.row > .label {
    justify-self: start;
}

.row:first-child {
    height: 48px;
    margin-bottom: 24px;
}

.row:last-child {
    height: 32px;
}

.font-r1 {
    display: flex;
}

.font-r2 {
    grid-template-columns: 46px 58px 44px 28px 32px 50px 22px 36px 50px 18px 62px 10px;
    width: 456px;
}

.grow-a { margin-left: 16px; }
.shrink-a { margin-left: 24px; }

.select {
    height: 48px;
    box-sizing: border-box;
    display: flex;
    align-items: center;
    justify-content: space-between;
    padding: 0 8px 0 11px;
    border: 2px solid #d2d2d2;
    border-radius: 7px;
    background: #fff;
    color: #222;
    font-size: 24.500px;
}

.sel-font { width: 280px; margin-right: 6px; }
.sel-size { width: 106px; }
.sel-number { width: 309px; }

.fmt {
    font-size: 27px;
    color: #444;
    font-family: "Liberation Sans", sans-serif;
}

.fmt-i {
    font-family: "Liberation Serif", serif;
    font-weight: 400;
    font-size: 30px;
}

.fmt-u {
    font-size: 25px;
    line-height: 29px;
    color: #444;
    border-bottom: 2px solid #444;
}

.vsep {
    width: 2px;
    height: 36px;
    background: #d0d0d0;
}

.align-r1 {
    grid-template-columns: 40px 64px 40px 42px 38px 36px;
    width: 260px;
}

.align-r2 {
    grid-template-columns: 40px 64px 40px 42px 40px 64px;
    width: 290px;
}

.selected {
    width: 48px;
    height: 48px;
    display: flex;
    justify-content: center;
    border-radius: 5px;
    background: #c4c4c4;
}

.ab {
    font-size: 21px;
    fill: #555;
    stroke: none;
    font-family: "Open Sans", sans-serif;
}

.merge-r1,
.merge-r2 {
    justify-content: start;
    grid-auto-flow: column;
    grid-auto-columns: max-content;
    column-gap: 0;
}

.merge-r1 svg:last-child,
.merge-r2 svg:last-child {
    margin-left: 11px;
}

.number-r2 {
    grid-template-columns: 46px 28px 52px 56px 22px 58px 46px;
    width: 318px;
}

.number-r1 {
    justify-items: start;
}

.num-sym {
    font-size: 35px;
    font-weight: 300;
    line-height: 32px;
    color: #444;
}

.dec {
    font-size: 18px;
    fill: #555;
    stroke: none;
}

.sort-a {
    font-size: 33px;
    font-weight: 300;
    fill: #2b8dd6;
    stroke: none;
}

.sort-z {
    font-size: 33px;
    font-weight: 300;
    fill: #444;
    stroke: none;
}

.b-cond { width: 116px; }
.b-table { width: 112px; }
.b-cellst { width: 88px; }
.b-ins, .b-del { width: 100px; }
.b-fmt { width: 104px; }

/* Formula bar */
.formula-bar {
    height: 52px;
    flex: none;
    display: flex;
    align-items: center;
    background: #fff;
    border-bottom: 6px double #b5b5b5;
}

.name-box {
    width: 169px;
    height: 50px;
    box-sizing: border-box;
    display: flex;
    align-items: center;
    justify-content: space-between;
    padding: 0 8px 0 20px;
    border-right: 3px solid #d0d0d0;
    font-size: 23px;
    color: #222;
}

.spin {
    display: flex;
    flex-direction: column;
    gap: 9px;
}

.tri {
    display: block;
    width: 0;
    height: 0;
    border-style: solid;
    border-color: transparent;
}

.tri.up { border-width: 0 7px 10px; border-bottom-color: #666; }
.tri.down { border-width: 10px 7px 0; border-top-color: #666; }
.tri.left { border-width: 11px 8px 11px 0; border-right-color: #bdbdbd; }
.tri.right { border-width: 11px 0 11px 8px; border-left-color: #bdbdbd; }

.fx-tools {
    display: grid;
    grid-template-columns: 28px 90px 30px 30px;
    align-items: center;
    margin-left: 28px;
}

.fx-tools > * {
    justify-self: center;
}

.fx {
    font-family: "Liberation Serif", serif;
    font-style: italic;
    font-size: 36px;
    line-height: 40px;
    color: #444;
}

.fx-sep {
    height: 30px;
}

.end-tri {
    margin-left: auto;
    margin-right: 2px;
}

/* Sheet */
.sheet {
    flex: 1;
    min-height: 0;
    overflow: hidden;
    display: grid;
    grid-template-columns: 108px 702px 746px 843px 647px 543px 1fr;
    grid-template-rows: 105px repeat(9, 77.75px);
    background: #fff;
    font-family: Lato, "Open Sans", sans-serif;
}

.corner {
    box-sizing: border-box;
    border-right: 2px solid #bdbdbd;
    border-bottom: 3px solid #bdbdbd;
    padding: 8px 5px 4px 10px;
    background: #fafafa;
}

.corner i {
    display: block;
    width: 100%;
    height: 100%;
    background: #dedede;
    clip-path: polygon(100% 0, 100% 100%, 0 100%);
}

.colhead {
    box-sizing: border-box;
    display: flex;
    align-items: center;
    justify-content: center;
    padding-top: 7px;
    border-right: 2px solid #e6e6e6;
    border-bottom: 3px solid #bdbdbd;
    background: linear-gradient(#ffffff, #f6f6f6);
    font-size: 50px;
    color: #606060;
}

.colhead.current {
    border-bottom: 5px solid #217346;
    background: #f0f0f0;
    color: #217346;
}

.colhead.last {
    border-right: 0;
}

.rowhead {
    box-sizing: border-box;
    display: flex;
    align-items: flex-end;
    justify-content: center;
    padding-bottom: 8px;
    border-right: 2px solid #bdbdbd;
    border-bottom: 2px solid #e4e4e4;
    background: linear-gradient(90deg, #ffffff, #f5f5f5);
    font-size: 50px;
    line-height: 60px;
    color: #666;
}

.cell {
    box-sizing: border-box;
    display: flex;
    align-items: flex-end;
    padding: 0 10px 7px 8px;
    border-right: 2px solid #d4d4d4;
    border-bottom: 2px solid #d4d4d4;
    font-size: 54px;
    line-height: 60px;
    color: #000;
    white-space: nowrap;
}

.cell.bold {
    font-size: 56px;
    font-weight: 700;
}

.cell.num {
    justify-content: flex-end;
}

/* Sheet tabs */
.sheet-tabs {
    height: 51px;
    flex: none;
    box-sizing: border-box;
    display: flex;
    align-items: flex-start;
    border-top: 2px solid #d4d4d4;
    background: #efefef;
}

.tab-arrows {
    display: flex;
    gap: 30px;
    margin: 13px 0 0 29px;
    width: 93px;
}

.sheet-tab {
    width: 156px;
    height: 42px;
    display: flex;
    align-items: center;
    justify-content: center;
    border-radius: 0 0 6px 6px;
    background: #fff;
    box-shadow: 0 2px 2px #b5b5b5;
    color: #1f8a50;
    font-size: 21px;
    font-weight: 700;
}

.add-sheet {
    width: 77px;
    text-align: center;
    font-size: 38px;
    line-height: 40px;
    font-weight: 600;
    color: #555;
}

.add-sep {
    height: 40px;
}

/* Status bar */
.statusbar {
    height: 46px;
    flex: none;
    box-sizing: border-box;
    display: flex;
    align-items: center;
    border-top: 2px solid #a9a9a9;
    background: linear-gradient(#e8e8e8, #d9d9d9);
    font-size: 24px;
    color: #555;
}

.st-ready { margin-left: 49px; width: 111px; }
.st-calc { width: 146px; }
.st-macro { width: 30px; margin-right: 34px; }
.st-access { margin-right: 6px; }

.view-btns {
    margin-left: auto;
    height: 44px;
    display: grid;
    grid-template-columns: 74px 71px 71px;
    justify-items: center;
    align-items: center;
}

.view-btn.active {
    align-self: stretch;
    justify-self: stretch;
    display: flex;
    align-items: center;
    justify-content: center;
    background: #a8a8a8;
}

.zoom-ctl {
    display: flex;
    align-items: center;
    margin-left: 24px;
}

.zoom-minus {
    width: 16px;
    height: 6px;
    border-radius: 1px;
    background: #666;
    margin-right: 14px;
}

.zoom-track {
    position: relative;
    width: 200px;
    height: 8px;
    border-radius: 4px;
    background: #9a9a9a;
}

.zoom-tick {
    position: absolute;
    left: 97px;
    top: 0;
    width: 6px;
    height: 8px;
    border-radius: 3px;
    background: #dcdcdc;
}

.zoom-knob {
    position: absolute;
    left: 120px;
    top: -12px;
    width: 34px;
    height: 32px;
    border-radius: 50%;
    background: #fff;
    box-shadow: 0 1px 2px #999;
}

.zoom-plus {
    margin-left: 12px;
    font-size: 30px;
    line-height: 30px;
    font-weight: 700;
    color: #666;
}

.zoom-pct {
    margin-left: 33px;
    margin-right: 42px;
    font-size: 26px;
}
```
